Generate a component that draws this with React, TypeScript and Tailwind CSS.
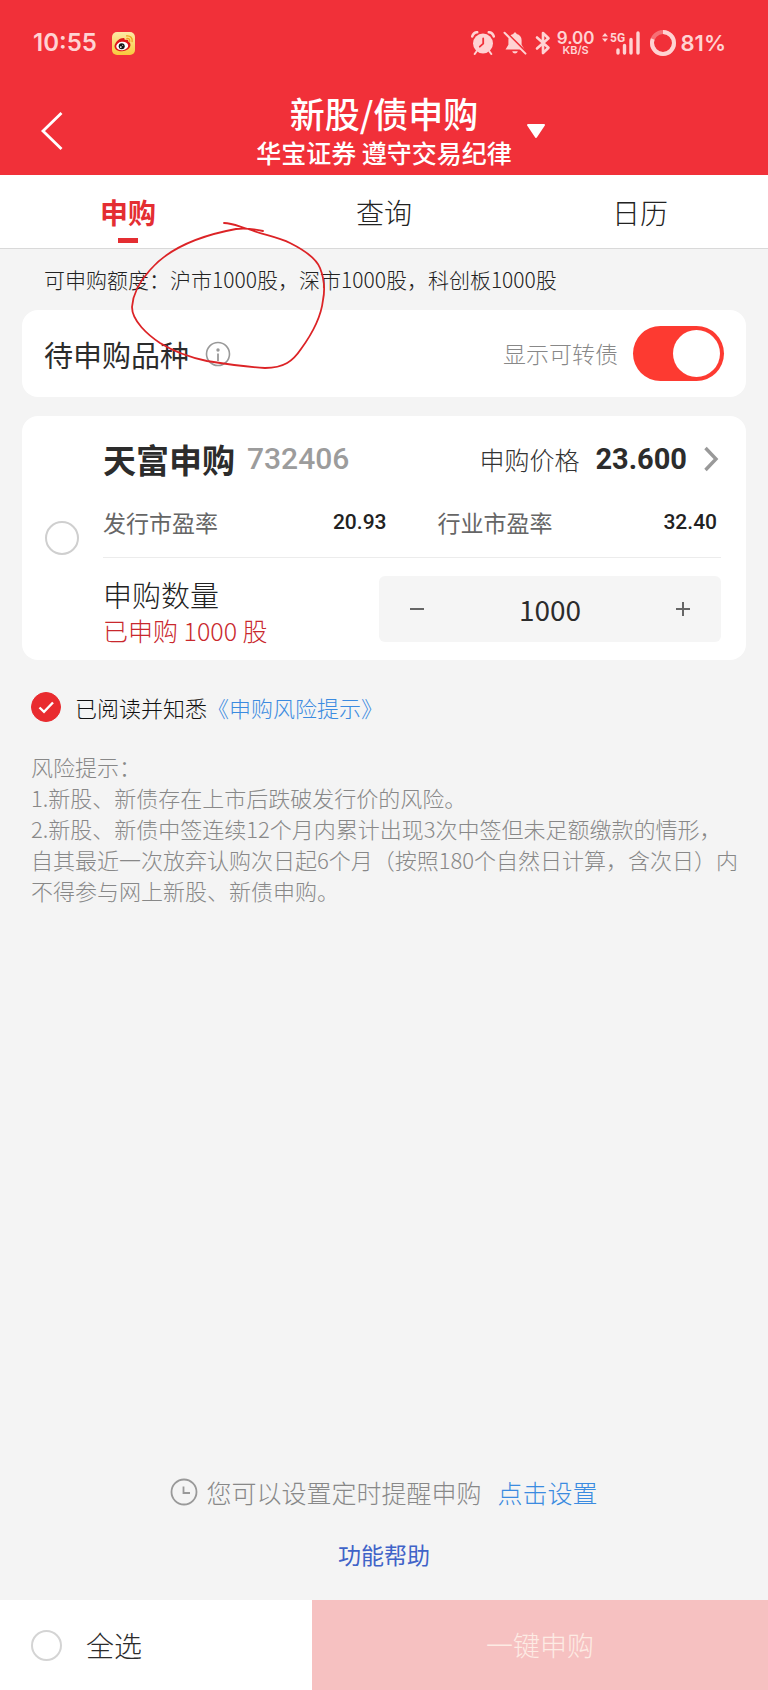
import { useState } from 'react';
import clsx from 'clsx';

const TABS = ['申购', '查询', '日历'];

const RISK_LINES = [
  '风险提示：',
  '1.新股、新债存在上市后跌破发行价的风险。',
  '2.新股、新债中签连续12个月内累计出现3次中签但未足额缴款的情形，',
  '自其最近一次放弃认购次日起6个月（按照180个自然日计算，含次日）内',
  '不得参与网上新股、新债申购。',
];

function WeiboIcon() {
  return (
    <svg viewBox="0 0 23 23" className="h-[23px] w-[23px]" aria-hidden="true">
      <defs>
        <linearGradient id="weibo-bg" x1="0" y1="0" x2="0" y2="1">
          <stop offset="0" stopColor="#fdeaa6" />
          <stop offset="1" stopColor="#f9c93c" />
        </linearGradient>
      </defs>
      <rect width="23" height="23" rx="5" fill="url(#weibo-bg)" />
      <path
        d="M10.5 6.2c1.300-.8 2.600.2 2.200 1.900 1.900-.8 4.300-.5 3.600 1.700 4.400 1.600 2.200 9.200-6.200 9.400-4.200.1-7.600-1.800-7.600-5 0-3.600 5.200-8.700 8-8z"
        fill="#e0161b"
      />
      <ellipse cx="10.200" cy="14" rx="6" ry="4.200" fill="#fff" transform="rotate(-8 10.200 14)" />
      <circle cx="9.700" cy="14.200" r="3" fill="#151515" />
      <circle cx="8.800" cy="15.100" r="0.900" fill="#fff" />
      <circle cx="10.700" cy="13.200" r="0.500" fill="#fff" />
      <g fill="none" stroke="#f0a01e" strokeWidth="1.300" strokeLinecap="round">
        <path d="M14.600 3.900c3.600-.6 6.300 2.200 5.500 5.800" />
        <path d="M14.900 6.400c1.900-.3 3.200 1.100 2.800 2.900" />
      </g>
    </svg>
  );
}

function AlarmIcon() {
  return (
    <svg viewBox="0 0 24 24" className="h-6 w-6" aria-hidden="true">
      <circle cx="12" cy="12.500" r="10" fill="currentColor" />
      <path d="M1.200 5.400C2 3 4 1.300 6.200 1.200M22.800 5.400C22 3 20 1.300 17.800 1.200" fill="none" stroke="currentColor" strokeWidth="2.600" strokeLinecap="round" />
      <path d="M5.500 20.500l-1.800 2.500M18.500 20.500l1.800 2.500" stroke="currentColor" strokeWidth="2" strokeLinecap="round" />
      <path d="M12.200 7.500v5.200l-3.400 3" fill="none" stroke="#f13039" strokeWidth="1.800" strokeLinecap="round" />
    </svg>
  );
}

function MutedBellIcon() {
  return (
    <svg viewBox="0 0 24 24" className="h-6 w-6" aria-hidden="true">
      <path d="M12 1.500c.9 0 1.500.6 1.600 1.500 3.200.7 5 3.200 5 6.200v4.600l2.900 4.700H2.500l2.900-4.700V9.200c0-3 1.800-5.500 5-6.200.1-.9.700-1.500 1.600-1.500z" fill="currentColor" />
      <path d="M9.200 20.300h5.600c-.5 1.400-1.500 2.200-2.800 2.200s-2.300-.8-2.800-2.200z" fill="currentColor" />
      <path d="M1.500 0L24 22.200" stroke="#f13039" strokeWidth="2.500" />
      <path d="M1.500 1.800l21 20.800" stroke="currentColor" strokeWidth="2" strokeLinecap="round" />
    </svg>
  );
}

function BluetoothIcon() {
  return (
    <svg viewBox="0 0 16 24" className="h-6 w-4" aria-hidden="true">
      <path d="M2 6.500l11.500 10.200L8 22V2l5.500 5.300L2 17.500" fill="none" stroke="currentColor" strokeWidth="2.600" strokeLinejoin="round" strokeLinecap="round" />
    </svg>
  );
}

function SignalIcon() {
  return (
    <svg viewBox="0 0 40 24" className="h-6 w-10" aria-hidden="true">
      <path d="M1 5.500L4 2l3 3.500zM1 7.500L4 11l3-3.500z" fill="currentColor" />
      <text x="9" y="10.500" fontSize="12" fontWeight="700" fontFamily="Roboto, sans-serif" fill="currentColor">
        5G
      </text>
      <path d="M17 19v3M23.500 14.500V22M30 8.500V22M37 2v20" stroke="currentColor" strokeWidth="3.400" strokeLinecap="round" />
    </svg>
  );
}

function BatteryRing() {
  return (
    <svg viewBox="0 0 28 28" className="h-7 w-7" aria-hidden="true">
      <circle cx="14" cy="14" r="11" fill="none" stroke="currentColor" strokeOpacity="0.400" strokeWidth="4" />
      <circle cx="14" cy="14" r="11" fill="none" stroke="currentColor" strokeWidth="4" pathLength="100" strokeDasharray="81 19" transform="rotate(-90 14 14)" />
    </svg>
  );
}

function StatusBar() {
  return (
    <div className="flex h-[86px] items-center justify-between pl-[33px] pr-[42px] font-['Inter',sans-serif] text-[#ffd3d3]">
      <div className="flex items-center gap-[15px]">
        <span className="text-2xl font-semibold">10:55</span>
        <WeiboIcon />
      </div>
      <div className="flex items-center">
        <div className="flex items-center gap-2">
          <AlarmIcon />
          <MutedBellIcon />
          <BluetoothIcon />
        </div>
        <div className="ml-1.5 flex flex-col items-center font-semibold">
          <span className="text-[17px] leading-[14px]">9.00</span>
          <span className="text-[11px] leading-[10px]">KB/S</span>
        </div>
        <div className="ml-1.5 flex items-center gap-2">
          <SignalIcon />
          <BatteryRing />
        </div>
        <span className="ml-1 text-[22px] font-semibold">81%</span>
      </div>
    </div>
  );
}

function Header() {
  return (
    <header className="bg-[#f13039] text-white">
      <StatusBar />
      <div className="grid h-[89px] grid-cols-[1fr_auto_1fr] items-center">
        <button type="button" aria-label="返回" className="ml-10 w-6">
          <svg viewBox="0 0 24 40" className="h-10 w-6" aria-hidden="true">
            <path d="M21.500 2L3 20l18.500 18" fill="none" stroke="currentColor" strokeWidth="2.800" />
          </svg>
        </button>
        <div className="pt-0.5 text-center">
          <h1 className="text-[35px] font-medium leading-10">新股/债申购</h1>
          <p className="text-[25px] font-medium leading-[38px]">华宝证券 遵守交易纪律</p>
        </div>
        <button type="button" aria-label="切换账户" className="ml-3.5 w-5">
          <svg viewBox="0 0 20 16" className="h-4 w-5" aria-hidden="true">
            <path d="M2 2h16l-8 12z" fill="currentColor" stroke="currentColor" strokeWidth="2" strokeLinejoin="round" />
          </svg>
        </button>
      </div>
    </header>
  );
}

function AnnotationCircle() {
  return (
    <svg viewBox="0 0 200 154" className="pointer-events-none absolute left-[128px] top-[218px] h-[154px] w-[200px]" aria-hidden="true">
      <path
        d="M96 5C105 5 112 9 120 11C136 17 150 19 162 25C176 32 188 40 192 50C196 60 197 72 195 82C193 100 184 116 173 131C165 143 156 150 137 150C118 149 98 146 79 143C60 139 45 133 32 125C20 117 4 103 4 89C5 75 12 63 22 52C40 31 70 18 108 11C118 10 126 11 135 13"
        fill="none"
        stroke="#dc2326"
        strokeWidth="1.800"
        strokeLinecap="round"
      />
    </svg>
  );
}

function StockCard() {
  const [checked, setChecked] = useState(false);
  const [amount, setAmount] = useState(1000);

  return (
    <section className="mx-[22px] mt-[19px] flex items-center rounded-2xl bg-white pl-[23px] pr-[25px]">
      <input
        type="checkbox"
        aria-label="选择天富申购"
        checked={checked}
        onChange={(e) => setChecked(e.target.checked)}
        className="h-[34px] w-[34px] shrink-0 appearance-none rounded-full border-2 border-[#cfcfcf] checked:bg-[#e92b2f]"
      />
      <div className="ml-6 flex-1 pb-3 pt-[23px]">
        <a href="#detail" className="flex items-center">
          <h2 className="text-[33px] font-bold leading-10 text-[#2c2c2c]">天富申购</h2>
          <span className="ml-3 font-['Roboto',sans-serif] text-[30px] font-medium leading-10 text-[#9c9c9c]">732406</span>
          <span className="ml-auto text-[25px] font-light leading-10 text-[#333]">申购价格</span>
          <span className="ml-4 font-['Roboto',sans-serif] text-[29px] font-bold leading-10 text-[#2c2c2c]">23.600</span>
          <svg viewBox="0 0 16 26" className="ml-4 mr-0.5 h-[26px] w-4" aria-hidden="true">
            <path d="M2.500 2L13 13 2.500 24" fill="none" stroke="#999" strokeWidth="3.400" />
          </svg>
        </a>
        <dl className="mt-6 flex items-center justify-between border-b border-[#ececec] pb-4 pr-1 leading-[38px]">
          <dt className="w-[120px] text-[23px] text-[#666]">发行市盈率</dt>
          <dd className="flex-1 text-right font-['Roboto',sans-serif] text-[21px] font-medium text-[#222]">20.93</dd>
          <dt className="ml-[51px] w-[116px] text-[23px] text-[#666]">行业市盈率</dt>
          <dd className="flex-1 text-right font-['Roboto',sans-serif] text-[21px] font-medium text-[#222]">32.40</dd>
        </dl>
        <div className="mt-[18px] flex items-start justify-between">
          <div>
            <label htmlFor="amount" className="block text-[29px] font-light leading-9 text-[#222]">
              申购数量
            </label>
            <p className="text-[25px] font-light leading-9 text-[#c9282d]">已申购 1000 股</p>
          </div>
          <div className="flex h-[66px] w-[342px] items-center rounded-md bg-[#f5f5f5]">
            <button type="button" aria-label="减少" onClick={() => setAmount(Math.max(0, amount - 500))} className="flex h-full w-[76px] items-center justify-center">
              <svg viewBox="0 0 14 14" className="h-3.5 w-3.5" aria-hidden="true">
                <path d="M0 7h14" stroke="#666" strokeWidth="2" />
              </svg>
            </button>
            <input
              id="amount"
              type="text"
              inputMode="numeric"
              value={amount}
              onChange={(e) => setAmount(Number(e.target.value) || 0)}
              className="h-full min-w-0 flex-1 bg-transparent text-center text-[28px] text-[#2c2c2c] outline-none"
            />
            <button type="button" aria-label="增加" onClick={() => setAmount(amount + 500)} className="flex h-full w-[76px] items-center justify-center">
              <svg viewBox="0 0 14 14" className="h-3.5 w-3.5" aria-hidden="true">
                <path d="M0 7h14M7 0v14" stroke="#666" strokeWidth="2" />
              </svg>
            </button>
          </div>
        </div>
      </div>
    </section>
  );
}

export default function App() {
  const [activeTab, setActiveTab] = useState(0);
  const [showBonds, setShowBonds] = useState(true);
  const [agreed, setAgreed] = useState(true);

  return (
    <div className="relative flex min-h-screen flex-col bg-[#f4f4f4] font-['Noto_Sans_CJK_SC',sans-serif] text-[#2c2c2c]">
      <Header />

      <nav className="grid h-[74px] grid-cols-3 border-b border-[#d9d9d9] bg-white">
        {TABS.map((tab, i) => (
          <button
            key={tab}
            type="button"
            onClick={() => setActiveTab(i)}
            className={clsx(
              'flex flex-col items-center pt-[17px] text-[28px] leading-10',
              i === activeTab ? 'font-bold text-[#e42e32]' : 'font-light text-[#222]'
            )}
          >
            {tab}
            {i === activeTab && <span className="mt-1.5 h-[5px] w-5 bg-[#e42e32]" />}
          </button>
        ))}
      </nav>

      <p className="pl-11 pt-[15px] text-[21px] font-light leading-[30px] text-[#222]">
        可申购额度：沪市1000股，深市1000股，科创板1000股
      </p>

      <section className="mx-[22px] mt-4 flex h-[87px] items-center rounded-2xl bg-white px-[22px]">
        <h2 className="text-[29px] leading-10">待申购品种</h2>
        <button type="button" aria-label="说明" className="ml-4">
          <svg viewBox="0 0 26 26" className="h-[26px] w-[26px]" aria-hidden="true">
            <circle cx="13" cy="13" r="11.500" fill="none" stroke="#999" strokeWidth="1.600" />
            <circle cx="13" cy="9" r="1.700" fill="#999" />
            <path d="M13 12.500v7.500" stroke="#999" strokeWidth="1.800" />
          </svg>
        </button>
        <label htmlFor="show-bonds" className="ml-auto text-[23px] font-light text-[#888]">
          显示可转债
        </label>
        <input
          id="show-bonds"
          type="checkbox"
          role="switch"
          checked={showBonds}
          onChange={(e) => setShowBonds(e.target.checked)}
          className="ml-[15px] flex h-[55px] w-[91px] appearance-none items-center rounded-full bg-[#ccc] px-1 before:h-[47px] before:w-[47px] before:rounded-full before:bg-white checked:justify-end checked:bg-[#fd3a31]"
        />
      </section>

      <StockCard />

      <div className="mt-[27px] flex items-center pl-[31px] text-[22px] leading-10">
        <span className="relative flex h-[30px] w-[30px]">
          <input
            id="agree"
            type="checkbox"
            checked={agreed}
            onChange={(e) => setAgreed(e.target.checked)}
            className="h-[30px] w-[30px] appearance-none rounded-full border border-[#ccc] checked:border-[#e92b2f] checked:bg-[#e92b2f]"
          />
          <svg viewBox="0 0 30 30" className="pointer-events-none absolute inset-0 h-[30px] w-[30px]" aria-hidden="true">
            <path d="M8.500 15.500l4.500 4.300 9-9.300" fill="none" stroke="#fff" strokeWidth="2.400" />
          </svg>
        </span>
        <label htmlFor="agree" className="ml-3.5 font-light text-[#111]">
          已阅读并知悉
        </label>
        <a href="#risk" className="font-light text-[#3b8be0]">
          《申购风险提示》
        </a>
      </div>

      <div id="risk" className="mt-6 pl-[31px] text-[22px] font-light leading-[31px] text-[#888]">
        {RISK_LINES.map((line) => (
          <p key={line}>{line}</p>
        ))}
      </div>

      <div className="mt-auto flex items-center justify-center text-[25px] font-light leading-10 text-[#888]">
        <svg viewBox="0 0 28 28" className="mr-2 h-7 w-7" aria-hidden="true">
          <circle cx="14" cy="14" r="12.500" fill="none" stroke="#999" strokeWidth="1.800" />
          <path d="M13.500 8.500V15H20" fill="none" stroke="#999" strokeWidth="1.800" />
        </svg>
        <span>您可以设置定时提醒申购</span>
        <a href="#reminder" className="ml-4 text-[#3b8be0]">
          点击设置
        </a>
      </div>
      <a href="#help" className="mx-auto mb-[26px] mt-[22px] text-[23px] leading-10 text-[#3f63c8]">
        功能帮助
      </a>

      <footer className="grid h-[90px] grid-cols-[312fr_456fr] bg-white">
        <label className="flex items-center gap-6 pl-[31px] text-[28px] font-light">
          <input type="checkbox" className="h-[31px] w-[31px] appearance-none rounded-full border-2 border-[#d4d4d4] checked:bg-[#e92b2f]" />
          全选
        </label>
        <button type="button" disabled className="bg-[#f6c1c1] text-[27px] font-light text-[#fdebe4]">
          一键申购
        </button>
      </footer>

      <AnnotationCircle />
    </div>
  );
}
